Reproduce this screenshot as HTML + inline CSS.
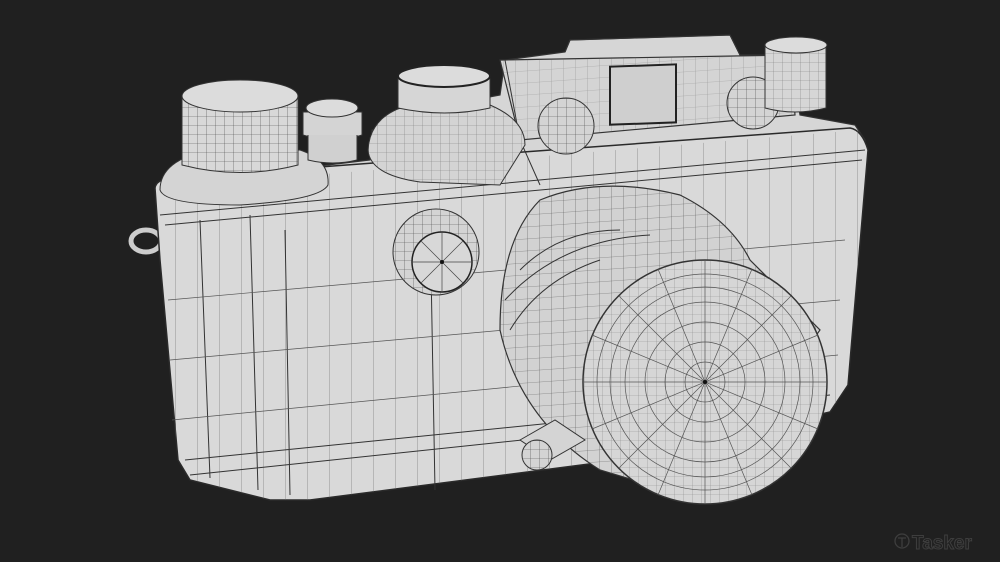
<!DOCTYPE html>
<html><head><meta charset="utf-8"><style>
html,body{margin:0;padding:0;background:#202020;overflow:hidden}
svg{display:block}
</style></head><body>
<svg width="1000" height="562" viewBox="0 0 1000 562" xmlns="http://www.w3.org/2000/svg">
<defs>
<pattern id="g" width="12" height="12" patternUnits="userSpaceOnUse" patternTransform="skewY(-4)">
<path d="M12 0V12M0 12H12" stroke="#555" stroke-width="0.6" fill="none"/>
</pattern>
<pattern id="v" width="22" height="500" patternUnits="userSpaceOnUse" patternTransform="skewY(-4)">
<path d="M22 0V500" stroke="#666" stroke-width="0.6"/>
</pattern>
<pattern id="r" width="9" height="9" patternUnits="userSpaceOnUse">
<path d="M9 0V9M0 9H9" stroke="#444" stroke-width="0.6" fill="none"/>
</pattern>
</defs>
<rect width="1000" height="562" fill="#202020"/>
<ellipse cx="146" cy="241" rx="15" ry="11" fill="none" stroke="#ccc" stroke-width="5"/>
<path d="M160 185 L370 160 L372 130 L420 110 L500 95 L505 60 L565 52 L570 40 L730 35 L740 55 L790 55 L800 115 L855 125 L865 140 L540 190 L160 215 Z" fill="#d6d6d6" stroke="#333" stroke-width="1.2"/>
<path d="M155 188 Q156 180 170 178 L850 128 Q862 130 868 150 L848 385 L830 412 L620 460 L310 500 L270 500 L190 480 L178 460 L160 260 Z" fill="#d9d9d9" stroke="#2a2a2a" stroke-width="1.5"/>
<path d="M155 188 L860 130 L868 150 L848 385 L830 412 L620 460 L310 500 L270 500 L190 480 L178 460 L160 260 Z" fill="url(#v)"/>
<path d="M160 215 L865 150 M165 225 L862 160 M185 460 L830 395 M190 475 L825 408 M285 230 L290 495 M430 215 L435 490 M200 220 L210 478 M250 215 L258 490" stroke="#333" stroke-width="1" fill="none"/>
<path d="M170 360 L840 300 M168 300 L845 240 M172 420 L838 355" stroke="#555" stroke-width="0.7"/>
<path d="M500 60 L790 55 L795 115 L520 140 Z" fill="#d4d4d4" stroke="#333" stroke-width="1.2"/>
<path d="M505 60 L520 140 L540 185 M565 52 L570 40 L730 35 L740 55" stroke="#333" fill="none"/>
<path d="M500 60 L790 55 L795 115 L520 140 Z" fill="url(#g)" opacity="0.5"/>
<rect x="610" y="88" width="66" height="58" fill="#cfcfcf" stroke="#222" stroke-width="2" transform="skewY(-2)"/>
<circle cx="566" cy="126" r="28" fill="#d4d4d4" stroke="#333"/>
<circle cx="566" cy="126" r="28" fill="url(#r)"/>
<circle cx="753" cy="103" r="26" fill="#d4d4d4" stroke="#333"/>
<circle cx="753" cy="103" r="26" fill="url(#r)"/>
<path d="M160 190 Q160 160 210 150 L300 150 Q330 160 328 185 Q320 200 240 205 Q165 205 160 190Z" fill="#d4d4d4" stroke="#333"/>
<path d="M182 97 L182 165 Q240 180 298 165 L298 97 Z" fill="#d8d8d8" stroke="#333"/>
<path d="M182 97 L182 165 Q240 180 298 165 L298 97 Z" fill="url(#r)"/>
<ellipse cx="240" cy="96" rx="58" ry="16" fill="#dcdcdc" stroke="#333"/>
<path d="M303 112 L303 135 Q333 145 362 135 L362 112 Z" fill="#d4d4d4" stroke="#333"/>
<path d="M308 135 L308 160 Q333 166 357 160 L357 135" fill="#d0d0d0" stroke="#333"/>
<ellipse cx="332" cy="108" rx="26" ry="9" fill="#dcdcdc" stroke="#333"/>
<path d="M368 150 Q370 115 410 105 L490 105 Q525 120 525 145 L500 185 L420 182 Q370 175 368 150Z" fill="#d4d4d4" stroke="#333"/>
<path d="M368 150 Q370 115 410 105 L490 105 Q525 120 525 145 L500 185 L420 182 Q370 175 368 150Z" fill="url(#r)" opacity="0.6"/>
<path d="M398 76 L398 108 Q445 118 490 108 L490 76 Z" fill="#d6d6d6" stroke="#333"/>
<ellipse cx="444" cy="76" rx="46" ry="11" fill="#dcdcdc" stroke="#222" stroke-width="2"/>
<path d="M765 46 L765 108 Q795 116 826 108 L826 46 Z" fill="#d6d6d6" stroke="#333"/>
<path d="M765 46 L765 108 Q795 116 826 108 L826 46 Z" fill="url(#r)" opacity="0.6"/>
<ellipse cx="796" cy="45" rx="31" ry="8" fill="#dcdcdc" stroke="#333"/>
<circle cx="436" cy="252" r="43" fill="#d4d4d4" stroke="#333"/>
<circle cx="436" cy="252" r="43" fill="url(#r)"/>
<circle cx="442" cy="262" r="30" fill="#d8d8d8" stroke="#222" stroke-width="1.5"/>
<g stroke="#444" stroke-width="0.7"><path d="M442 232V292M412 262H472M421 241L463 283M463 241L421 283"/></g>
<circle cx="442" cy="262" r="2" fill="#111"/>
<path d="M540 200 Q600 175 680 195 Q730 220 750 260 L820 330 L700 500 L600 470 Q520 420 500 330 Q500 240 540 200Z" fill="#d2d2d2" stroke="#333" stroke-width="1.2"/>
<path d="M540 200 Q600 175 680 195 Q730 220 750 260 L820 330 L700 500 L600 470 Q520 420 500 330 Q500 240 540 200Z" fill="url(#g)"/>
<path d="M520 270 Q560 230 620 230 M510 330 Q540 280 600 260 M505 300 Q560 240 650 235" stroke="#333" fill="none"/>
<path d="M520 440 L555 420 L585 440 L550 460 Z" fill="#d4d4d4" stroke="#333"/>
<circle cx="537" cy="455" r="15" fill="#d4d4d4" stroke="#333"/>
<circle cx="537" cy="455" r="15" fill="url(#r)"/>
<circle cx="705" cy="382" r="122" fill="#d6d6d6" stroke="#333" stroke-width="1.5"/>
<circle cx="705" cy="382" r="122" fill="url(#r)" opacity="0.5"/>
<g fill="none" stroke="#555" stroke-width="0.7">
<circle cx="705" cy="382" r="108"/><circle cx="705" cy="382" r="95"/><circle cx="705" cy="382" r="80"/><circle cx="705" cy="382" r="60"/><circle cx="705" cy="382" r="40"/><circle cx="705" cy="382" r="20"/>
<path d="M705 260V504M583 382H827M619 296L791 468M791 296L619 468M658 269L752 495M752 269L658 495M592 335L818 429M592 429L818 335"/>
</g>
<circle cx="705" cy="382" r="2" fill="#111"/>
<g fill="none" stroke="#3e3e3e" stroke-width="1.3">
<circle cx="902" cy="541" r="7"/>
<path d="M898 538H906M902 538V547"/>
</g>
<text x="912" y="549" font-family="Liberation Sans, sans-serif" font-size="19" font-weight="bold" fill="none" stroke="#3e3e3e" stroke-width="1">Tasker</text>
</svg>
</body></html>
